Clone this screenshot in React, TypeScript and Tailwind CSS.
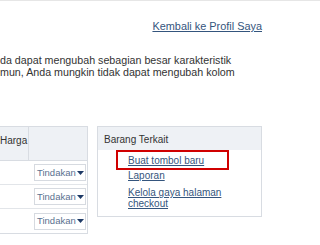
import React from "react";

const link = "text-[#34557d] underline";

const ActionButton: React.FC = () => (
  <span className="inline-flex items-center h-[17px] pl-[2px] pr-[1px] border border-[#d6dae0] bg-white text-[#5a7190] text-[9.5px] leading-none">
    Tindakan
    <svg width="7" height="4" viewBox="0 0 7 4" className="ml-[1px]">
      <path d="M0 0h7L3.5 4z" fill="#1e3a66" />
    </svg>
  </span>
);

export default function App() {
  return (
    <div
      className="w-[320px] h-[245px] overflow-hidden bg-white border-t border-[#e6e6e6] text-[#333] text-[10px]"
      style={{ fontFamily: '"Liberation Sans", Arial, sans-serif' }}
    >
      <div className="flex justify-end pr-[58px] pt-[18px]">
        <a className={`${link} text-[10.9px] leading-[14px]`}>Kembali ke Profil Saya</a>
      </div>

      <p className="mt-[21px] leading-[12px] text-[10.7px]">
        da dapat mengubah sebagian besar karakteristik
        <br />
        mun, Anda mungkin tidak dapat mengubah kolom
      </p>

      <div className="flex items-start gap-[9px] mt-[48px]">
        {/* actions table */}
        <div className="w-[88px] border border-l-0 border-[#d8dce2]">
          <div className="flex h-[34px] bg-[#eef1f5] border-b border-[#d8dce2]">
            <div className="w-[29px] pt-[6px] border-r border-[#d8dce2]">Harga</div>
            <div className="flex-1" />
          </div>
          {[0, 1, 2].map((i) => (
            <div
              key={i}
              className={`flex h-[24px] items-center pl-[34px] ${i < 2 ? "border-b border-[#e2e5e9]" : ""}`}
            >
              <ActionButton />
            </div>
          ))}
        </div>

        {/* related items box */}
        <div className="w-[165px] h-[91px] border border-[#d8dce2]">
          <div className="h-[23px] bg-[#eef1f5] pl-[6px] pt-[5px]">Barang Terkait</div>
          <div className="flex flex-col pl-[18px] text-[10px]">
            <div className="w-[113px] h-[20px] border-2 border-[#d00000] pl-[10px] flex items-center">
              <a className={link}>Buat tombol baru</a>
            </div>
            <a className={`${link} pl-[12px] leading-[11px]`}>Laporan</a>
            <a className={`${link} pl-[12px] mt-[6px] leading-[11px]`}>
              Kelola gaya halaman
              <br />
              checkout
            </a>
          </div>
        </div>
      </div>
    </div>
  );
}
